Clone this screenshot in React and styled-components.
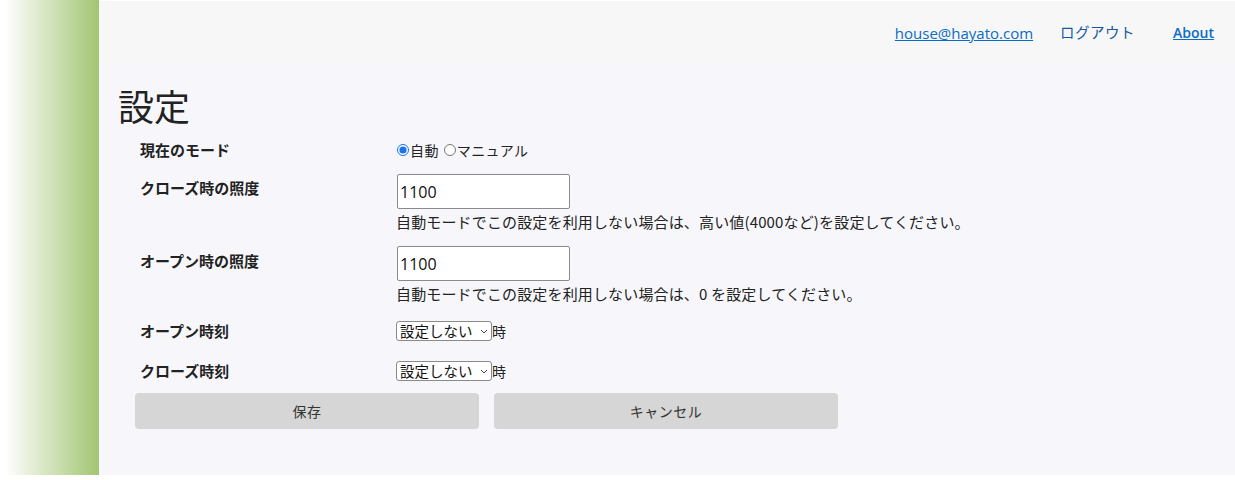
import React from 'react';
import styled, { createGlobalStyle } from 'styled-components';

const GlobalStyle = createGlobalStyle`
  body {
    margin: 0;
    background: #ffffff;
    font-family: "Noto Sans CJK JP", "Noto Sans", sans-serif;
    color: #222;
  }
`;

const Page = styled.div`
  display: flex;
  height: 475px;
`;

const Sidebar = styled.div`
  width: 99px;
  flex-shrink: 0;
  background: linear-gradient(to right, #ffffff 5%, #a2c572 100%);
`;

const Main = styled.div`
  flex: 1;
  display: flex;
  flex-direction: column;
  background: #f7f7fb;
  border-top: 1px solid #ffffff;
`;

const Header = styled.div`
  height: 64px;
  background: #f7f7f8;
  display: flex;
  justify-content: flex-end;
  align-items: flex-start;
  padding: 20px 21px 0 0;
  box-sizing: border-box;
  gap: 27px;
`;

const HeaderLink = styled.a`
  font-family: "Open Sans", "Noto Sans CJK JP", sans-serif;
  font-size: ${p => p.$size || 15}px;
  font-weight: ${p => p.$bold ? 600 : 400};
  color: ${p => p.$dark ? '#14589e' : '#0a6cc4'};
  text-decoration: ${p => p.$plain ? 'none' : 'underline'};
  margin-left: ${p => p.$gap || 0}px;
  letter-spacing: ${p => p.$spacing || 0}px;
  line-height: 24px;
  cursor: pointer;
`;

const Title = styled.h1`
  margin: 19px 0 13px 19px;
  font-size: 36px;
  font-weight: 400;
  line-height: 43px;
  color: #222;
`;

const Form = styled.div`
  display: flex;
  flex-direction: column;
  gap: 14px;
`;

const Row = styled.div`
  display: grid;
  grid-template-columns: 256px 1fr;
  padding-left: 41px;
  align-items: ${p => p.$center ? 'center' : 'start'};
  min-height: ${p => p.$height || 0}px;
`;

const Label = styled.div`
  font-size: 15px;
  font-weight: 700;
  line-height: 20px;
  padding-top: ${p => p.$top || 0}px;
`;

const Field = styled.div`
  display: flex;
  flex-direction: column;
`;

const Inline = styled.div`
  display: flex;
  align-items: center;
  font-size: 14px;
  line-height: 20px;
  letter-spacing: 0.4px;
`;

const Radio = styled.input`
  margin: 0 1px 0 1px;
  width: 12px;
  height: 12px;
  accent-color: #1a73e8;
`;

const RadioLabel = styled.label`
  display: flex;
  align-items: center;
  margin-right: 4px;
`;

const TextInput = styled.input`
  width: 173px;
  height: 35px;
  box-sizing: border-box;
  border: 1px solid #8a8a8a;
  border-radius: 2px;
  background: #fff;
  padding: 0 2px;
  font-family: "Open Sans", "Noto Sans", sans-serif;
  font-size: 16px;
  color: #111;
  margin-left: 1px;
`;

const Hint = styled.div`
  margin-top: 3px;
  font-size: 15px;
  letter-spacing: 0.15px;
  line-height: 20px;
  color: #222;
`;

const Select = styled.select`
  appearance: none;
  height: 20px;
  width: 96px;
  box-sizing: border-box;
  font-family: "Noto Sans CJK JP", sans-serif;
  font-size: 14.5px;
  line-height: 18px;
  padding: 0 12px 0 3px;
  border: 1px solid #8a8a8a;
  border-radius: 3px;
  color: #111;
  background: #fff url("data:image/svg+xml,%3Csvg xmlns='http://www.w3.org/2000/svg' width='8' height='5' viewBox='0 0 8 5'%3E%3Cpath d='M1 1l3 3 3-3' fill='none' stroke='%23444' stroke-width='1'/%3E%3C/svg%3E") no-repeat right 3px center;
`;

const Buttons = styled.div`
  display: flex;
  gap: 15px;
  padding-left: 36px;
  margin-top: -5px;
`;

const Button = styled.button`
  width: 344px;
  height: 36px;
  border: none;
  border-radius: 4px;
  background: #d6d6d6;
  font-family: "Noto Sans CJK JP", sans-serif;
  font-size: 14px;
  letter-spacing: 0.5px;
  color: #333;
  cursor: pointer;
`;

const hours = ['設定しない', ...Array.from({ length: 24 }, (_, i) => String(i))];

const TimeSelect = () => (
  <Inline>
    <Select defaultValue="設定しない">
      {hours.map(h => <option key={h} value={h}>{h}</option>)}
    </Select>
    時
  </Inline>
);

export default function App() {
  return (
    <Page>
      <GlobalStyle />
      <Sidebar />
      <Main>
        <Header>
          <HeaderLink href="#">house@hayato.com</HeaderLink>
          <HeaderLink $plain $dark $size={14.5} $spacing={0.5}>ログアウト</HeaderLink>
          <HeaderLink href="#" $bold $size={14} $gap={11}>About</HeaderLink>
        </Header>
        <Title>設定</Title>
        <Form>
          <Row>
            <Label>現在のモード</Label>
            <Inline>
              <RadioLabel><Radio type="radio" name="mode" defaultChecked />自動</RadioLabel>
              <RadioLabel><Radio type="radio" name="mode" />マニュアル</RadioLabel>
            </Inline>
          </Row>
          <Row>
            <Label $top={4}>クローズ時の照度</Label>
            <Field>
              <TextInput defaultValue="1100" />
              <Hint>自動モードでこの設定を利用しない場合は、高い値(4000など)を設定してください。</Hint>
            </Field>
          </Row>
          <Row>
            <Label $top={5}>オープン時の照度</Label>
            <Field>
              <TextInput defaultValue="1100" />
              <Hint>自動モードでこの設定を利用しない場合は、0 を設定してください。</Hint>
            </Field>
          </Row>
          <Row $center $height={26}>
            <Label>オープン時刻</Label>
            <TimeSelect />
          </Row>
          <Row $center $height={26}>
            <Label>クローズ時刻</Label>
            <TimeSelect />
          </Row>
          <Buttons>
            <Button>保存</Button>
            <Button>キャンセル</Button>
          </Buttons>
        </Form>
      </Main>
    </Page>
  );
}
